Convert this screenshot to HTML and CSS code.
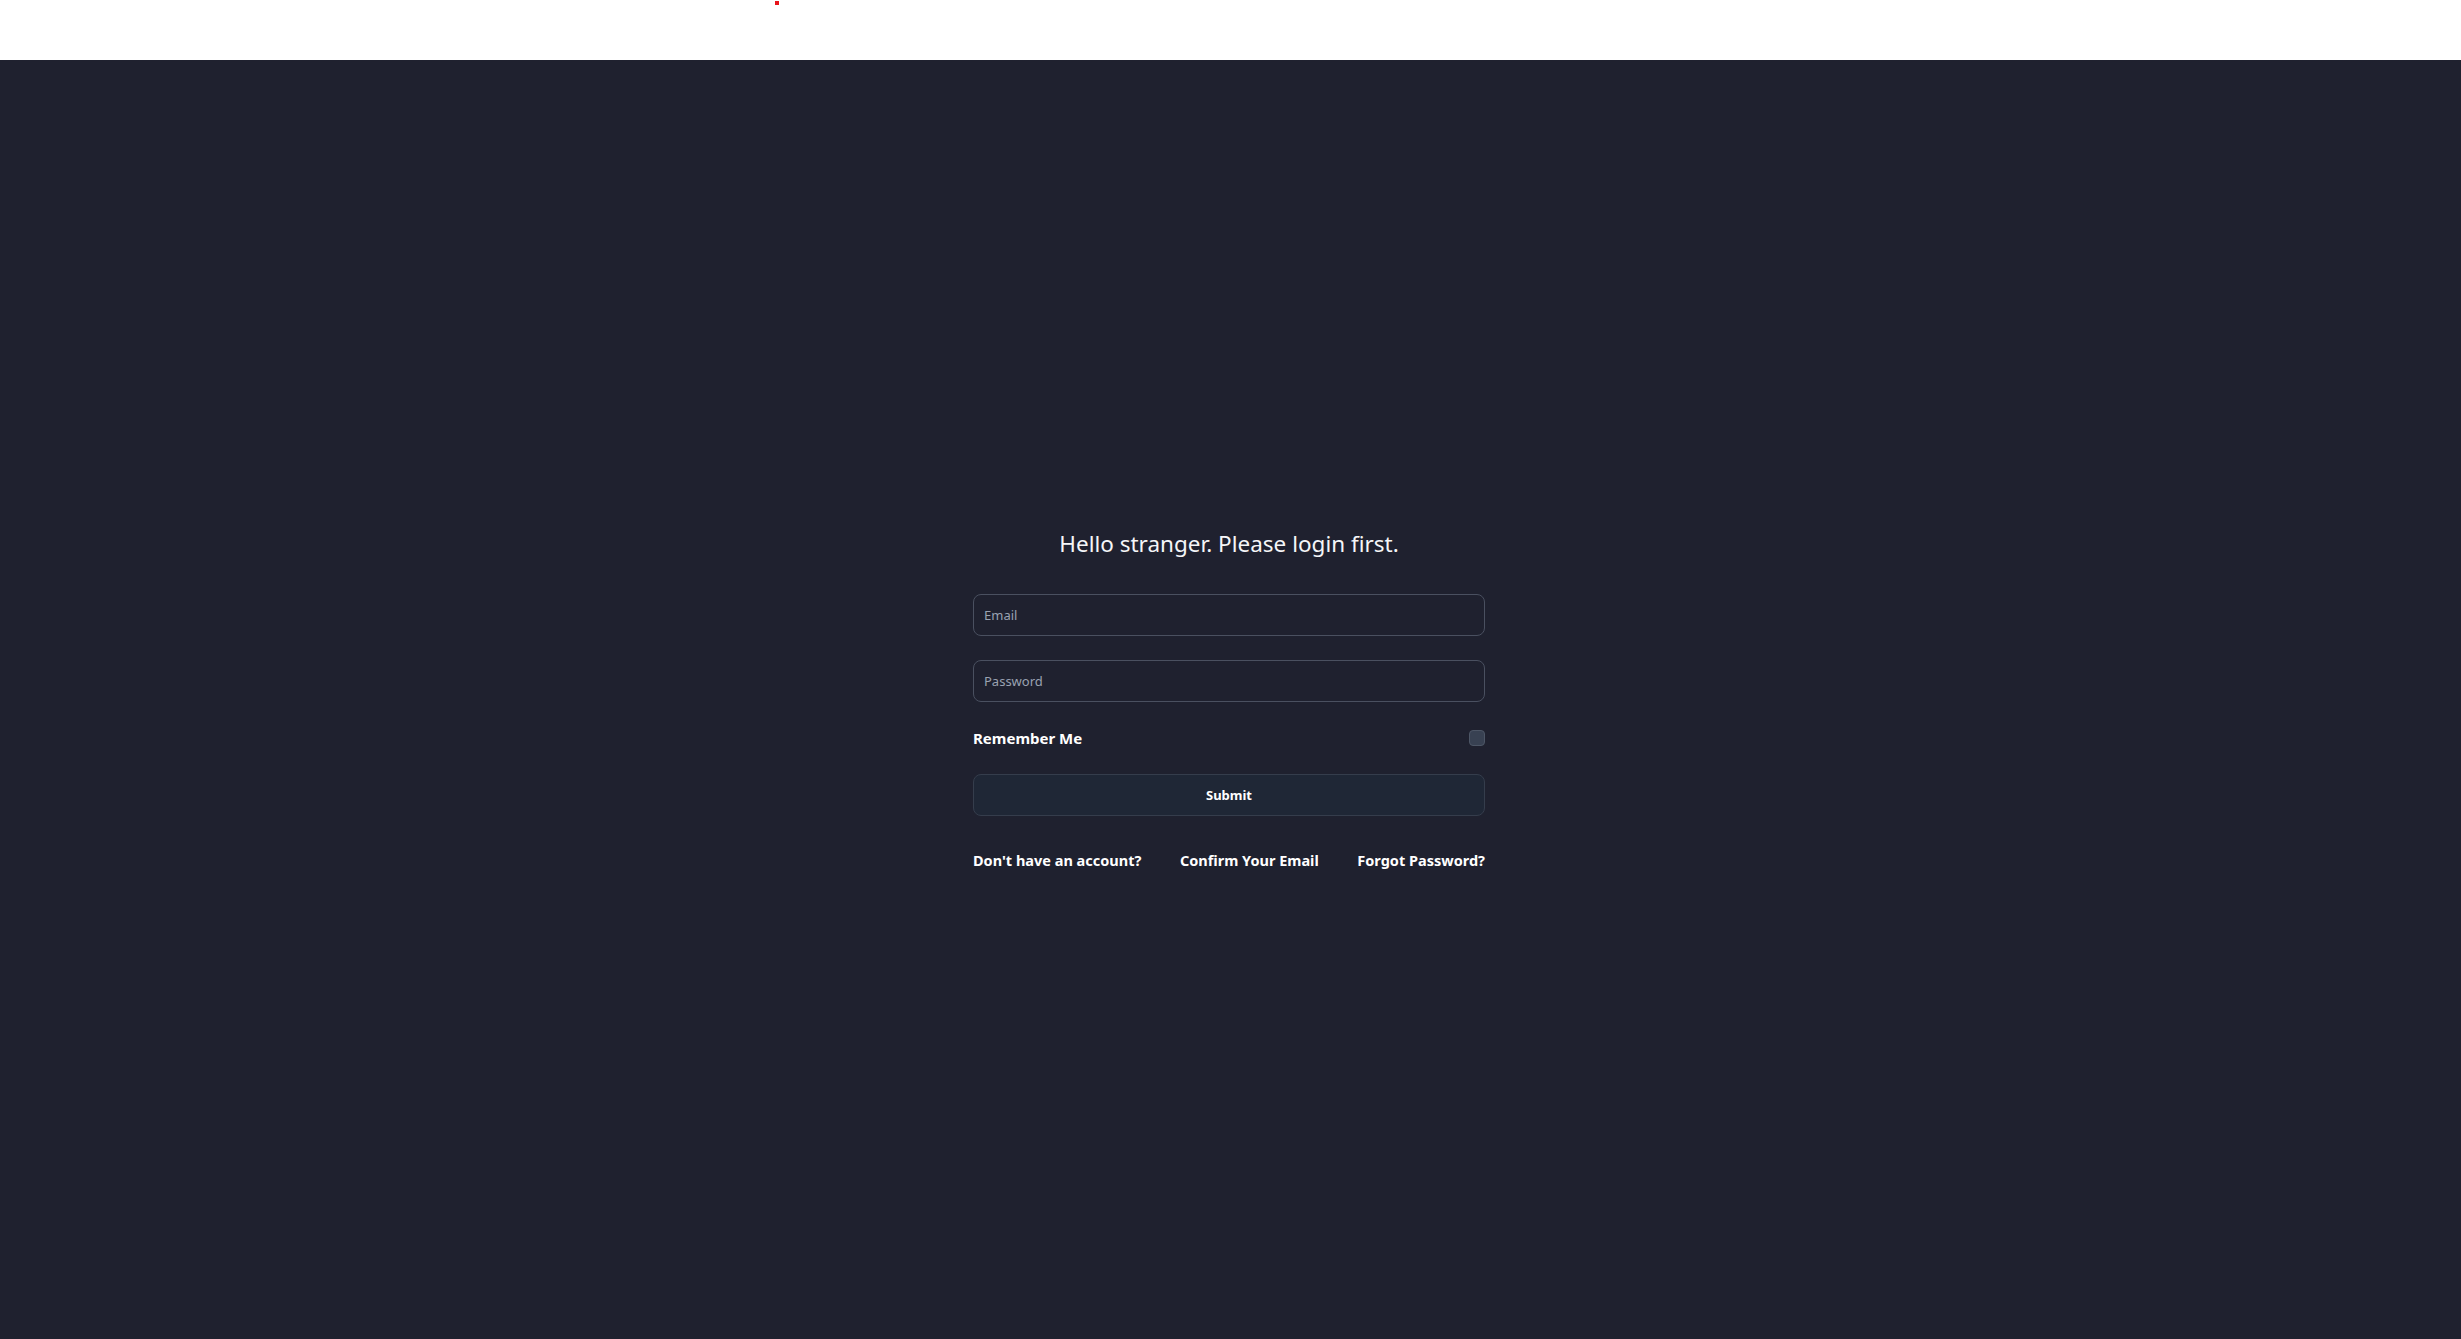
FILE: index.html
```html
<!DOCTYPE html>
<html lang="en">
<head>
<meta charset="utf-8">
<title>Login</title>
<link rel="stylesheet" href="styles.css">
</head>
<body>
<header class="topbar"><span class="dot"></span></header>
<main class="stage">
  <form class="login">
    <h1 class="title">Hello stranger. Please login first.</h1>
    <input class="field" type="email" placeholder="Email">
    <input class="field field-gap" type="password" placeholder="Password">
    <label class="remember">
      <span>Remember Me</span>
      <span class="check"></span>
    </label>
    <button class="submit" type="button">Submit</button>
    <nav class="links">
      <a href="#">Don't have an account?</a>
      <a href="#">Confirm Your Email</a>
      <a href="#">Forgot Password?</a>
    </nav>
  </form>
</main>
</body>
</html>
```
FILE: styles.css
```css
* { box-sizing: border-box; }
html, body { margin: 0; height: 100%; }
body {
  font-family: "Noto Sans", "Open Sans", Arial, sans-serif;
  display: flex;
  flex-direction: column;
  background: #ffffff;
}
.topbar {
  height: 60px;
  background: #ffffff;
  position: relative;
  flex: none;
}
.dot {
  position: absolute;
  left: 775px;
  top: 1px;
  width: 4px;
  height: 4px;
  background: #e8141b;
}
.stage {
  flex: 1;
  background: #1f212f;
  display: flex;
  align-items: center;
  justify-content: center;
  padding: 0 3px 1px 0;
}
.login {
  width: 512px;
  display: flex;
  flex-direction: column;
}
.title {
  margin: 0 0 32px;
  font-size: 22.5px;
  line-height: 36px;
  font-weight: 400;
  text-align: center;
  color: #f5f6f8;
}
.field {
  height: 42px;
  width: 100%;
  border: 1px solid #4a5060;
  border-radius: 8px;
  background: #1f212f;
  padding: 0 10px;
  font-family: inherit;
  font-size: 13px;
  color: #e5e7eb;
  outline: none;
}
.field::placeholder { color: #9aa2b1; }
.field-gap { margin-top: 24px; }
.remember {
  margin-top: 24px;
  height: 24px;
  display: flex;
  align-items: center;
  justify-content: space-between;
  font-size: 15px;
  font-weight: 700;
  color: #ffffff;
}
.check {
  width: 16px;
  height: 16px;
  border-radius: 4px;
  background: #384152;
  border: 1px solid #4d5666;
}
.submit {
  margin-top: 24px;
  height: 42px;
  width: 100%;
  border: 1px solid #353d4c;
  border-radius: 8px;
  background: #1f2736;
  color: #ffffff;
  font-family: inherit;
  font-size: 13px;
  font-weight: 700;
}
.links {
  margin-top: 32px;
  height: 24px;
  display: flex;
  align-items: center;
  justify-content: space-between;
}
.links a {
  color: #ffffff;
  text-decoration: none;
  font-size: 14.5px;
  font-weight: 700;
}
```
